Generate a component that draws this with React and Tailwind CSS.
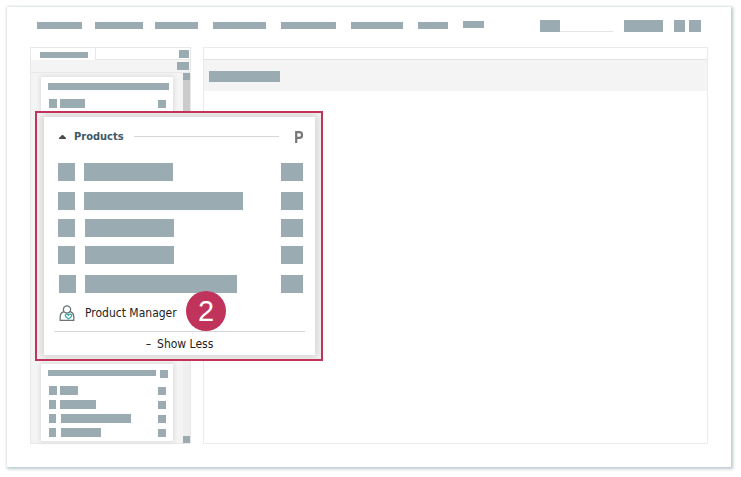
const Block = ({ className = "" }) => (
    <span className={`block shrink-0 bg-[#9babb2] ${className}`} />
);

const navItems = [
    "w-[45px]",
    "w-[48px] ml-[13px]",
    "w-[43px] ml-3",
    "w-[53px] ml-[15px]",
    "w-[55px] ml-[15px]",
    "w-[52px] ml-[15px]",
    "w-[30px] ml-[15px]",
    "w-[21px] ml-[15px] mb-px",
];

const smallRows = [
    { box: "w-2", bar: "w-[18px] ml-[3px]" },
    { box: "w-[7px]", bar: "w-9 ml-1" },
    { box: "w-[7px]", bar: "w-[70px] ml-[5px]" },
    { box: "w-[7px]", bar: "w-10 ml-[5px]" },
];

const productRows = [
    { row: "mt-4", bar: "w-[89px] ml-[9px]" },
    { row: "mt-[11px]", bar: "w-[159px] ml-[9px]" },
    { row: "mt-[9px]", bar: "w-[89px] ml-[10px]" },
    { row: "mt-[9px]", bar: "w-[89px] ml-[10px]" },
    { row: "mt-[11px] pl-px", bar: "w-[152px] ml-[9px]" },
];

const TopBar = () => (
    <header className="flex h-10 shrink-0 items-start pl-[30px] pr-[30px] pt-[13px]">
        <nav className="flex h-[9px] items-end">
            {navItems.map((item) => (
                <Block key={item} className={`h-[7px] ${item}`} />
            ))}
        </nav>
        <div className="ml-auto flex items-end">
            <Block className="h-3 w-5" />
            <span className="h-px w-[53px] bg-[#e3e6e7]" />
            <Block className="ml-[11px] h-3 w-[39px]" />
            <Block className="ml-[11px] h-3 w-[11px]" />
            <Block className="ml-1 h-3 w-3" />
        </div>
    </header>
);

const SmallRow = ({ box, bar }) => (
    <div className="flex items-end">
        <Block className={`h-[9px] ${box}`} />
        <Block className={`h-[9px] ${bar}`} />
        <Block className="ml-auto h-2 w-2" />
    </div>
);

const Sidebar = () => (
    <aside className="flex w-[161px] shrink-0 flex-col border border-[#e8e8e8] bg-[#f4f4f4]">
        <div className="flex h-3 bg-white">
            <div className="ml-px flex w-16 items-center border-r border-[#e8e8e8] pl-2 pt-px">
                <Block className="h-[6px] w-12" />
            </div>
            <div className="flex flex-1 items-center justify-end border-b border-[#e8e8e8] pr-px">
                <Block className="h-2 w-[10px]" />
            </div>
        </div>
        <div className="flex h-[13px] items-center justify-end border-b border-[#e8e8e8] pr-px">
            <Block className="h-2 w-3" />
        </div>
        <div className="flex flex-1">
            <div className="flex flex-1 flex-col justify-between pb-[2px] pl-[10px] pr-[10px] pt-1">
                <section className="h-20 bg-white pl-[7px] pr-1 pt-[6px] shadow-[0_0_4px_1px_#dcdcdc]">
                    <Block className="h-[7px] w-[121px]" />
                    <div className="mt-[9px] pr-[3px]">
                        <SmallRow box="ml-px w-2" bar="w-[25px] ml-[3px]" />
                    </div>
                </section>
                <section className="h-[77px] bg-white pl-[7px] pr-[5px] pt-[6px] shadow-[0_0_4px_1px_#dcdcdc]">
                    <div className="flex justify-between">
                        <Block className="h-[6px] w-[108px]" />
                        <Block className="h-2 w-2" />
                    </div>
                    <div className="mt-2 flex flex-col gap-[5px] pl-px pr-[2px]">
                        {smallRows.map((row) => (
                            <SmallRow key={row.bar} {...row} />
                        ))}
                    </div>
                </section>
            </div>
            <div className="flex w-2 flex-col bg-[#efefef]">
                <Block className="h-[7px]" />
                <span className="h-40 bg-[#cbcbcb]" />
                <Block className="mt-auto h-[7px]" />
            </div>
        </div>
    </aside>
);

const Workspace = () => (
    <main className="min-w-0 flex-1 border border-[#ebebeb]">
        <div className="h-3 border-b border-[#e3e3e3]" />
        <div className="flex h-[31px] items-center bg-[#f4f4f4] pl-[5px]">
            <Block className="mt-px h-[11px] w-[71px]" />
        </div>
    </main>
);

const ManagerIcon = () => (
    <svg className="h-4 w-4" viewBox="0 0 16 16" fill="none" stroke="#6c7376" strokeWidth="1.3">
        <circle cx="8" cy="4.4" r="3.6" />
        <path d="M5 6.6 C2.4 7.4 1.2 9.2 1.2 11.8 V15.3 H14.8 V11.8 C14.8 9.2 13.6 7.4 11 6.6" />
        <path
            d="M9.5 14 L6.6 11.6 C5.5 9.5 7.8 8.4 9.5 10.2 C11.2 8.4 13.5 9.5 12.4 11.6 Z"
            stroke="#42b2ac"
            fill="#fff"
        />
    </svg>
);

const ProductsPanel = () => (
    <section className="absolute left-[28px] top-[104px] w-72 border-2 border-[#c0335b] bg-[#f4f4f4] pb-1 pl-[7px] pr-[6px] pt-1 font-['DejaVu_Sans_Condensed','DejaVu_Sans',sans-serif]">
        <div className="bg-white px-[10px] pt-[9px] shadow-[0_0_8px_3px_#d6d6d6] [clip-path:inset(-4px_-6px_-4px_-7px)]">
            <div className="flex h-[21px] items-center pl-[5px] pr-[2px]">
                <button className="flex items-center text-[11px] leading-4 font-bold text-[#405866]">
                    <svg className="mr-2 h-1 w-[7px]" viewBox="0 0 7 4" fill="#4b4b4b">
                        <path d="M3 0H4L7 3V4H0V3Z" />
                    </svg>
                    Products
                </button>
                <span className="ml-[10px] mr-4 h-px flex-1 bg-[#d5d7d8]" />
                <svg className="h-3 w-2" viewBox="0 0 8 12" fill="none" stroke="#777" strokeWidth="2.2">
                    <path d="M1.2 12V1.2H4.7Q7 1.2 7 3.9Q7 6.8 4.7 6.8H1" />
                </svg>
            </div>
            <div className="pl-1 pr-[2px]">
                {productRows.map((item, i) => (
                    <div key={i} className={`flex ${item.row}`}>
                        <Block className="h-[18px] w-[17px]" />
                        <Block className={`h-[18px] ${item.bar}`} />
                        <Block className="ml-auto h-[18px] w-[22px]" />
                    </div>
                ))}
            </div>
            <a href="#manager" className="flex h-[38px] items-center pl-[5px] pt-[2px] text-[12px] leading-4 text-[#222]">
                <ManagerIcon />
                <span className="ml-[10px]">Product Manager</span>
            </a>
            <button className="flex h-6 w-full items-center justify-center gap-[6px] border-t border-[#d5d7d8] text-[12px] leading-4 text-[#222]">
                <span>–</span>
                <span>Show Less</span>
            </button>
        </div>
        <span className="absolute left-[149px] top-[178px] flex h-10 w-10 items-center justify-center rounded-full bg-[#c0335b] pt-[2px] font-['Liberation_Sans',sans-serif] text-[29px] text-white">
            2
        </span>
    </section>
);

export default function App() {
    return (
        <div className="flex min-h-screen bg-white pb-[10px] pl-[7px] pr-[10px] pt-[7px]">
            <div className="relative flex flex-1 flex-col bg-white shadow-[1px_1px_3px_1px_#b9c8cb]">
                <TopBar />
                <div className="flex flex-1 gap-3 pb-[23px] pl-[23px] pr-[23px]">
                    <Sidebar />
                    <Workspace />
                </div>
                <ProductsPanel />
            </div>
        </div>
    );
}
